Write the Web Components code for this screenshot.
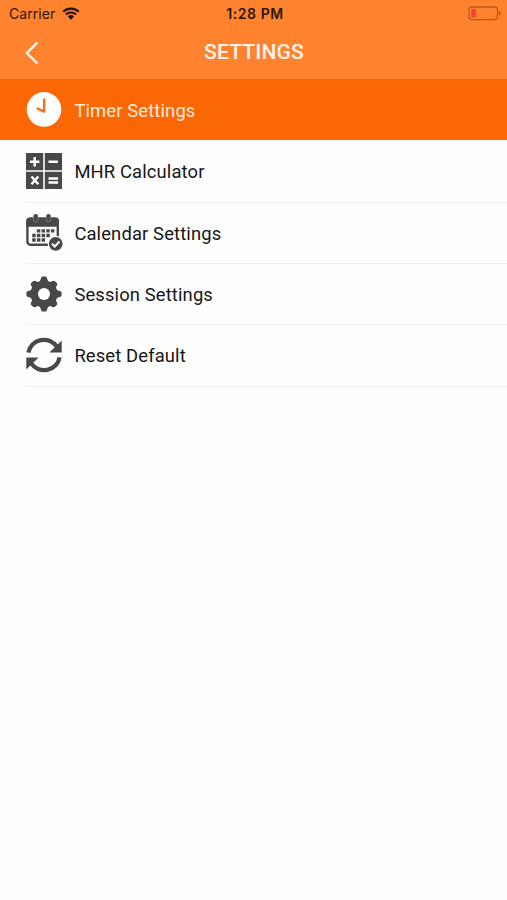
<!DOCTYPE html>
<html lang="en"><head><meta charset="utf-8"><title>Settings</title>
<style>html,body{margin:0;background:#fefefe}body{font-family:Roboto,"Liberation Sans",sans-serif;width:507px;height:900px;overflow:hidden}</style></head>
<body><settings-screen></settings-screen>
<script>
const tooth=a=>`<path transform="rotate(${a} 18 18)" d="M13.4 6.5 ${a%90?'15.2 2.2Q15.6 1.2 16.6 1.2h2.8q1 0 1.4 1l1.8 4.3z':'15.3 1.6Q15.5.4 16.5.4h3q1 0 1.2 1.2l1.9 4.9z'}"/>`;
const icons = {
clock:`<circle cx="18" cy="17.4" r="17.3" fill="#fff"/><path d="M18.2 7.4v12.2L11.6 16.6" fill="none" stroke="#f4701f" stroke-width="2.5" stroke-linecap="round" stroke-linejoin="round"/>`,
calc:`<path fill="#48484a" d="M0 0h17.2v17.2H0zM18.8 0H36v17.2H18.8zM0 18.8h17.2V36H0zM18.8 18.8H36V36H18.8z"/><path d="M4 8.7h9.4M8.7 4v9.4M22.5 8.7h9.4M5.5 23.5l6.8 7.8M12.3 23.5l-6.8 7.8M22.5 25.6h9.6M22.5 29.4h9.6" stroke="#fff" stroke-width="2.5"/>`,
calendar:`<rect x="1.4" y="4.8" width="30.4" height="26" rx="3.2" fill="#fff" stroke="#48484a" stroke-width="2.4"/><path fill="#48484a" d="M.2 12.8V7a3.4 3.4 0 0 1 3.4-3.4h26A3.4 3.4 0 0 1 33 7v5.8z"/><path d="M9.7 2.6v2.6M22.5 2.6v2.6" stroke="#b9b9ba" stroke-width="5" stroke-linecap="round"/><path d="M9.7 2v3.5M22.5 2v3.5" stroke="#48484a" stroke-width="4.2" stroke-linecap="round"/><path d="M10.8 16.9h17.8M6.2 21.5h18.2M6.2 26h13.5" stroke="#48484a" stroke-width="3.3" stroke-dasharray="3.5 1.2"/><circle cx="29.7" cy="29.8" r="8" fill="#fff"/><circle cx="29.7" cy="29.8" r="6.9" fill="#48484a"/><path d="m26 29.8 2.7 2.7 4.8-5" fill="none" stroke="#fff" stroke-width="2"/>`,
gear:`<g fill="#48484a"><circle cx="18" cy="18" r="13.6"/>${[0,45,90,135,180,225,270,315].map(tooth).join('')}</g><circle cx="18" cy="18" r="6" fill="#fff"/>`,
reset:`<path d="M2.4 15.6A15.6 15.2 0 0 1 31 9.9M33.6 20.4A15.6 15.2 0 0 1 5 26.1" fill="none" stroke="#48484a" stroke-width="4.2"/><path fill="#48484a" d="M35.7 3.5v12H23.4zM.3 32.5v-12h12.3z"/>`};
class StatusBar extends HTMLElement{constructor(){super();this.attachShadow({mode:'open'}).innerHTML=`
<style>:host{display:grid;grid-template-columns:1fr auto 1fr;align-items:center;height:28px;padding:0 6px 2px 9px;box-sizing:border-box;color:#29170c;font:14px Inter,"Liberation Sans",sans-serif}
.left{display:flex;align-items:center;gap:7px}.carrier{letter-spacing:.05px}.time{font-weight:600;font-size:14px;letter-spacing:.6px}.battery{justify-self:end}svg{display:block}</style>
<div class="left"><span class="carrier">Carrier</span><svg width="18" height="13" viewBox="0 0 18 13"><path d="M1.2 4.8a11.2 11.2 0 0 1 15.6 0M3.9 7.6a7.3 7.3 0 0 1 10.2 0" fill="none" stroke="#24140a" stroke-width="2.1"/><path d="M9 12.7 5.8 9.6a4.7 4.7 0 0 1 6.4 0z" fill="#24140a"/></svg></div>
<span class="time">1:28 PM</span>
<svg class="battery" width="33" height="15" viewBox="0 0 33 15"><rect x="1" y="1" width="28.5" height="12.6" rx="2.8" fill="none" stroke="#b45c20" stroke-width="1.3"/><rect x="3.2" y="3" width="4.6" height="8.6" rx="1" fill="#fb403b"/><path d="M31 5v4.6q1.5-.8 1.5-2.3T31 5z" fill="#a8541c"/></svg>`}}
customElements.define('status-bar',StatusBar);
class NavBar extends HTMLElement{constructor(){super();this.attachShadow({mode:'open'}).innerHTML=`
<style>:host{display:grid;grid-template-columns:1fr auto 1fr;align-items:center;height:52px;box-sizing:border-box;padding:0 24px 2px 25px;border-bottom:1px solid #ec6812;color:#fff5eb}
h1{margin:0;font:500 21px/25px Roboto,sans-serif;letter-spacing:.2px}svg{display:block}</style>
<svg width="14" height="24" viewBox="0 0 14 24"><path d="M12.3 1.7 1.8 12l10.5 10.3" fill="none" stroke="#fff5eb" stroke-width="2.4"/></svg><h1><slot></slot></h1>`}}
customElements.define('nav-bar',NavBar);
class SettingsItem extends HTMLElement{constructor(){super();this.attachShadow({mode:'open'}).innerHTML=`
<style>:host{display:flex;height:61.4px;padding-left:25.4px;box-sizing:border-box;color:#161616}
:host([selected]){height:60.4px;background:#fb6705;color:#ffebd9;margin-bottom:.8px}
svg{flex:none;width:36px;height:36px;margin:11.9px 0 0 .5px;overflow:visible}
:host([selected]) svg{margin-top:12.4px}
.row{flex:1;display:flex;box-sizing:border-box;border-bottom:1px solid #f0f0f0}
:host([selected]) .row{border-color:transparent}
.label{margin:20px 0 0 12.5px;font-size:18.4px;line-height:22px;letter-spacing:.13px;white-space:nowrap}</style>
<div class="row"><svg viewBox="0 0 36 36">${icons[this.getAttribute('icon')]||''}</svg><span class="label"><slot></slot></span></div>`}}
customElements.define('settings-item',SettingsItem);
class SettingsScreen extends HTMLElement{constructor(){super();this.attachShadow({mode:'open'}).innerHTML=`
<style>:host{display:block;width:507px;height:900px;background:#fefefe}header{background:#ff832f}</style>
<header><status-bar></status-bar><nav-bar>SETTINGS</nav-bar></header>
<main><settings-item icon="clock" selected>Timer Settings</settings-item><settings-item icon="calc">MHR Calculator</settings-item><settings-item icon="calendar">Calendar Settings</settings-item><settings-item icon="gear">Session Settings</settings-item><settings-item icon="reset">Reset Default</settings-item></main>`}}
customElements.define('settings-screen',SettingsScreen);
</script></body></html>
